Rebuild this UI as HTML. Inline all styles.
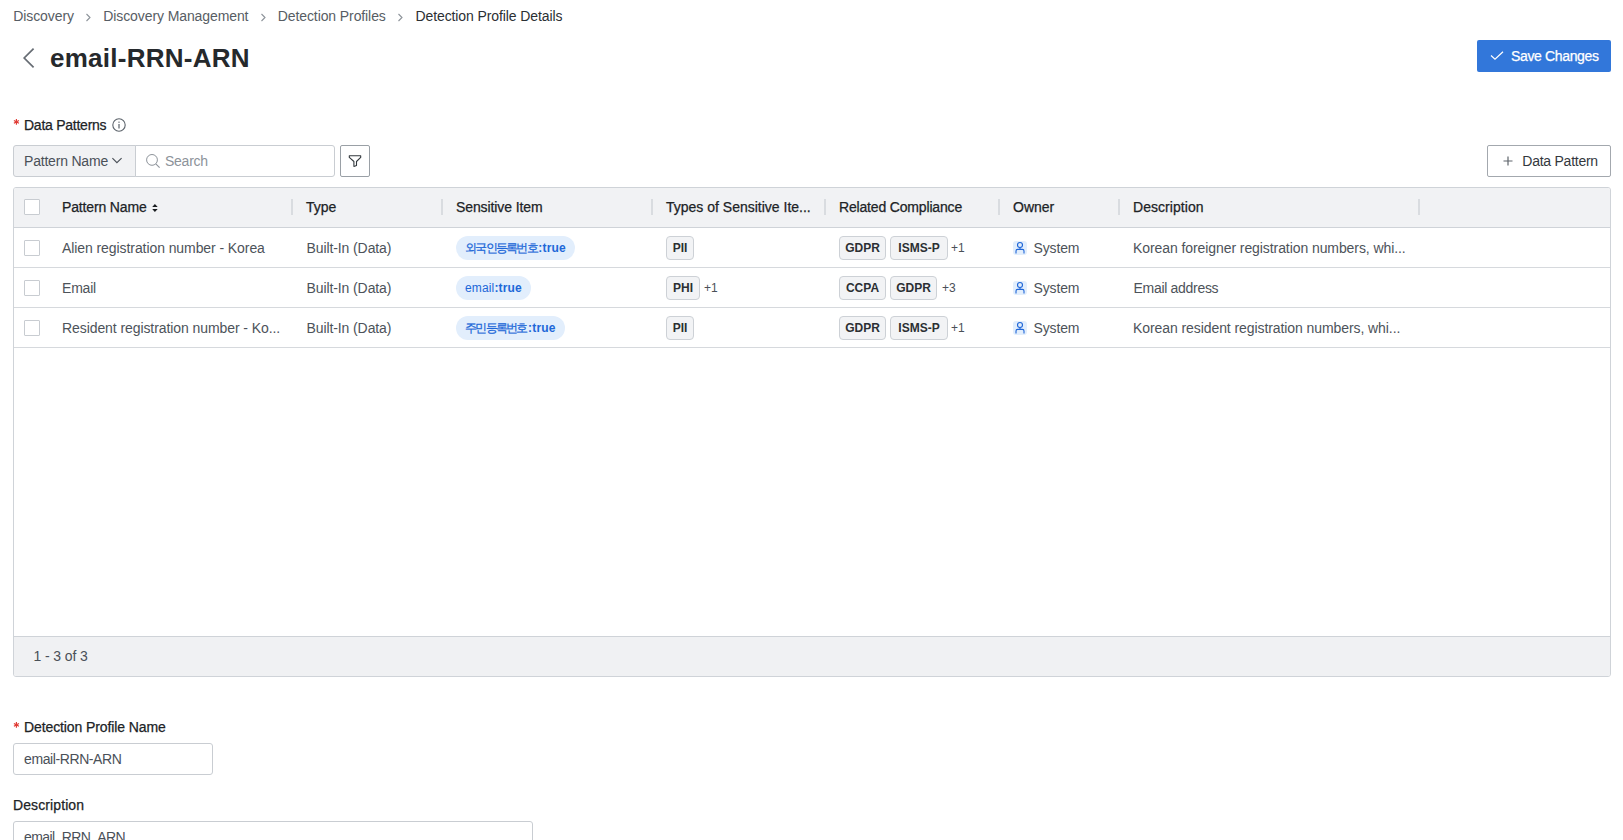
<!DOCTYPE html>
<html><head><meta charset="utf-8">
<style>
*{box-sizing:border-box;margin:0;padding:0}
html,body{width:1623px;height:840px;overflow:hidden;background:#fff}
body{font-family:"Liberation Sans",sans-serif;color:#4a5058;position:relative;font-size:14px;line-height:16px}
.abs{position:absolute;white-space:nowrap}
.med{-webkit-text-stroke:0.25px currentColor}
.bc{top:8px;color:#575d64;letter-spacing:-0.1px}
.bc.cur{color:#2b2f33}
.sep{position:absolute;top:13px}
.title{left:50px;top:43px;font-size:26px;line-height:30px;font-weight:700;color:#26292c;letter-spacing:0.25px}
.btn-primary{position:absolute;left:1477px;top:40px;width:134px;height:32px;background:#3277da;border-radius:2px;color:#fff}
.btn-outline{position:absolute;left:1487px;top:145px;width:124px;height:32px;border:1px solid #a3a8ae;border-radius:2px;background:#fff;color:#33383d}
.req{color:#e0342f}
.label{color:#202326}
.table{position:absolute;left:13px;top:187px;width:1598px;height:490px;border:1px solid #cfd3d8;border-radius:3px;overflow:hidden}
.thead{position:absolute;left:0;top:0;width:100%;height:40px;background:#f1f2f4;border-bottom:1px solid #cfd3d8}
.row{position:absolute;left:0;width:100%;height:40px;border-bottom:1px solid #d6d9dd;background:#fff}
.cb{position:absolute;left:10px;top:12px;width:16px;height:16px;border:1px solid #c8ccd1;background:#fff;border-radius:1px}
.th{position:absolute;top:11px;color:#202326}
.vsep{position:absolute;top:11px;width:2px;height:16px;background:#d9dce0}
.td{position:absolute;top:12px;color:#4d535a;letter-spacing:-0.08px}
.pill{position:absolute;top:8px;height:24px;border-radius:12px;background:#e2eefc;color:#2067d8;font-size:12px;line-height:24px;padding:0 9px;letter-spacing:0.15px}
.tag{position:absolute;top:8px;height:24px;border:1px solid #cdd1d6;border-radius:4px;background:#f2f3f5;color:#2b2f33;font-size:12px;line-height:22px;font-weight:700;padding:0;text-align:center}
.ko{font-size:11.5px;letter-spacing:-1.75px;margin-right:1.6px;-webkit-text-stroke:0.25px currentColor}
.more{position:absolute;top:12px;font-size:12px;color:#4a5058}
.footer{position:absolute;left:0;top:448px;width:100%;height:41px;background:#f0f1f3;border-top:1px solid #cfd3d8}
.input{position:absolute;border:1px solid #c9cdd2;border-radius:3px;background:#fff}
</style></head><body>

<!-- breadcrumb -->
<span class="abs bc" style="left:13.3px">Discovery</span>
<svg class="sep" style="left:85px" width="7" height="9" viewBox="0 0 7 9"><path d="M1.5 1 L5 4.5 L1.5 8" fill="none" stroke="#8d939a" stroke-width="1.1"/></svg>
<span class="abs bc" style="left:103.3px">Discovery Management</span>
<svg class="sep" style="left:260px" width="7" height="9" viewBox="0 0 7 9"><path d="M1.5 1 L5 4.5 L1.5 8" fill="none" stroke="#8d939a" stroke-width="1.1"/></svg>
<span class="abs bc" style="left:277.8px">Detection Profiles</span>
<svg class="sep" style="left:397px" width="7" height="9" viewBox="0 0 7 9"><path d="M1.5 1 L5 4.5 L1.5 8" fill="none" stroke="#8d939a" stroke-width="1.1"/></svg>
<span class="abs bc cur" style="left:415.5px">Detection Profile Details</span>

<!-- title -->
<svg class="abs" style="left:22px;top:47px" width="14" height="22" viewBox="0 0 14 22"><path d="M11.6 1.6 L2.2 11 L11.6 20.4" fill="none" stroke="#676d74" stroke-width="1.7"/></svg>
<span class="abs title">email-RRN-ARN</span>

<div class="btn-primary">
  <svg style="position:absolute;left:13px;top:11px" width="14" height="10" viewBox="0 0 14 10"><path d="M1 4.5 L5 8.3 L13 0.8" fill="none" stroke="#fff" stroke-width="1.2"/></svg>
  <span class="abs med" style="left:34px;top:8px;letter-spacing:-0.35px">Save Changes</span>
</div>

<!-- data patterns label -->
<svg class="abs" style="left:12px;top:118px" width="9" height="8" viewBox="0 0 9 8"><path d="M4.4 1 V6.8 M1.9 2.45 L6.9 5.35 M1.9 5.35 L6.9 2.45" stroke="#e03a33" stroke-width="1.15"/></svg>
<span class="abs label med" style="left:24px;top:117px;letter-spacing:-0.25px">Data Patterns</span>
<svg class="abs" style="left:112px;top:118px" width="14" height="14" viewBox="0 0 14 14"><circle cx="7" cy="7" r="6.2" fill="none" stroke="#5c636b" stroke-width="1.1"/><rect x="6.4" y="6" width="1.2" height="4.5" fill="#5c636b"/><rect x="6.4" y="3.6" width="1.2" height="1.2" fill="#5c636b"/></svg>

<!-- toolbar -->
<div class="input" style="left:13px;top:145px;width:123px;height:32px;background:#f1f2f4;border-radius:3px 0 0 3px">
  <span class="abs" style="left:10px;top:7px;color:#4a5058;letter-spacing:-0.2px">Pattern Name</span>
  <svg style="position:absolute;left:98px;top:11px" width="11" height="8" viewBox="0 0 11 8"><path d="M0.4 1.2 L4.9 5.6 L9.6 1.2" fill="none" stroke="#4a5058" stroke-width="1.15"/></svg>
</div>
<div class="input" style="left:135px;top:145px;width:200px;height:32px;border-radius:0 3px 3px 0">
  <svg style="position:absolute;left:9px;top:8px" width="16" height="16" viewBox="0 0 16 16"><circle cx="7" cy="5.9" r="5.4" fill="none" stroke="#8d939a" stroke-width="1"/><path d="M10.8 9.8 L14.6 13.6" stroke="#8d939a" stroke-width="1.1"/></svg>
  <span class="abs" style="left:29px;top:7px;color:#8d939a;letter-spacing:-0.25px">Search</span>
</div>
<div class="input" style="left:340px;top:145px;width:30px;height:32px;border-color:#9aa0a6;border-radius:2px">
  <svg style="position:absolute;left:7px;top:8px" width="15" height="15" viewBox="0 0 15 15"><path d="M1.3 1.7 H12.7 V3.4 L8.5 7.5 V11.4 L5.9 12.4 V7.5 L1.3 3.4 Z" fill="none" stroke="#33383d" stroke-width="1.1" stroke-linejoin="round"/></svg>
</div>

<div class="btn-outline">
  <svg style="position:absolute;left:15px;top:10px" width="10" height="11" viewBox="0 0 10 11"><path d="M5 0.5 V9.5 M0.5 5 H9.5" stroke="#5f656c" stroke-width="1.2"/></svg>
  <span class="abs" style="left:34.3px;top:7px;letter-spacing:-0.25px">Data Pattern</span>
</div>

<!-- table -->
<div class="table">
  <div class="thead">
    <div class="cb" style="top:11px"></div>
    <span class="th med" style="left:48px;letter-spacing:-0.15px">Pattern Name</span>
    <svg style="position:absolute;left:138px;top:16px" width="7" height="9" viewBox="0 0 7 9"><path d="M0.2 2.9 L2.9 0.1 L5.7 2.9 Z M0.2 5 L2.9 7.9 L5.7 5 Z" fill="#1a1d20"/></svg>
    <div class="vsep" style="left:277px"></div>
    <span class="th med" style="left:292px">Type</span>
    <div class="vsep" style="left:427px"></div>
    <span class="th med" style="left:442px;letter-spacing:-0.1px">Sensitive Item</span>
    <div class="vsep" style="left:637px"></div>
    <span class="th med" style="left:652px">Types of Sensitive Ite...</span>
    <div class="vsep" style="left:810px"></div>
    <span class="th med" style="left:825px;letter-spacing:-0.17px">Related Compliance</span>
    <div class="vsep" style="left:984px"></div>
    <span class="th med" style="left:999px">Owner</span>
    <div class="vsep" style="left:1104px"></div>
    <span class="th med" style="left:1119px;letter-spacing:0.05px">Description</span>
    <div class="vsep" style="left:1404px"></div>
  </div>

  <div class="row" style="top:40px">
    <div class="cb"></div>
    <span class="td" style="left:48px">Alien registration number - Korea</span>
    <span class="td" style="left:292.5px;letter-spacing:-0.1px">Built-In (Data)</span>
    <span class="pill" style="left:442px"><span class="ko">외국인등록번호</span><b>:true</b></span>
    <span class="tag" style="left:652px;width:28px">PII</span>
    <span class="tag" style="left:825px;width:47px">GDPR</span>
    <span class="tag" style="left:876px;width:58px">ISMS-P</span>
    <span class="more" style="left:937px">+1</span>
    <svg style="position:absolute;left:999px;top:13px" width="14" height="14" viewBox="0 0 14 14"><rect width="14" height="14" rx="3" fill="#e2eefc"/><circle cx="7" cy="4" r="2.5" fill="none" stroke="#2067d8" stroke-width="1.1"/><path d="M7 6.5 V8.4 M3 12.6 V10 Q3 8.4 4.6 8.4 H9.4 Q11 8.4 11 10 V12.6" fill="none" stroke="#2067d8" stroke-width="1.1"/></svg>
    <span class="td" style="left:1019.5px;letter-spacing:-0.15px">System</span>
    <span class="td" style="left:1119px">Korean foreigner registration numbers, whi...</span>
  </div>
  <div class="row" style="top:80px">
    <div class="cb"></div>
    <span class="td" style="left:48px;letter-spacing:-0.2px">Email</span>
    <span class="td" style="left:292.5px;letter-spacing:-0.1px">Built-In (Data)</span>
    <span class="pill" style="left:442px">email<b>:true</b></span>
    <span class="tag" style="left:652px;width:34px">PHI</span>
    <span class="more" style="left:690px">+1</span>
    <span class="tag" style="left:825px;width:47px">CCPA</span>
    <span class="tag" style="left:876px;width:47px">GDPR</span>
    <span class="more" style="left:928px">+3</span>
    <svg style="position:absolute;left:999px;top:13px" width="14" height="14" viewBox="0 0 14 14"><rect width="14" height="14" rx="3" fill="#e2eefc"/><circle cx="7" cy="4" r="2.5" fill="none" stroke="#2067d8" stroke-width="1.1"/><path d="M7 6.5 V8.4 M3 12.6 V10 Q3 8.4 4.6 8.4 H9.4 Q11 8.4 11 10 V12.6" fill="none" stroke="#2067d8" stroke-width="1.1"/></svg>
    <span class="td" style="left:1019.5px;letter-spacing:-0.15px">System</span>
    <span class="td" style="left:1119.5px;letter-spacing:-0.3px">Email address</span>
  </div>
  <div class="row" style="top:120px">
    <div class="cb"></div>
    <span class="td" style="left:48px">Resident registration number - Ko...</span>
    <span class="td" style="left:292.5px;letter-spacing:-0.1px">Built-In (Data)</span>
    <span class="pill" style="left:442px"><span class="ko">주민등록번호</span><b>:true</b></span>
    <span class="tag" style="left:652px;width:28px">PII</span>
    <span class="tag" style="left:825px;width:47px">GDPR</span>
    <span class="tag" style="left:876px;width:58px">ISMS-P</span>
    <span class="more" style="left:937px">+1</span>
    <svg style="position:absolute;left:999px;top:13px" width="14" height="14" viewBox="0 0 14 14"><rect width="14" height="14" rx="3" fill="#e2eefc"/><circle cx="7" cy="4" r="2.5" fill="none" stroke="#2067d8" stroke-width="1.1"/><path d="M7 6.5 V8.4 M3 12.6 V10 Q3 8.4 4.6 8.4 H9.4 Q11 8.4 11 10 V12.6" fill="none" stroke="#2067d8" stroke-width="1.1"/></svg>
    <span class="td" style="left:1019.5px;letter-spacing:-0.15px">System</span>
    <span class="td" style="left:1119px">Korean resident registration numbers, whi...</span>
  </div>

  <div class="footer">
    <span class="abs" style="left:19.5px;top:11px;color:#4a5058;letter-spacing:-0.1px">1 - 3 of 3</span>
  </div>
</div>

<!-- form -->
<svg class="abs" style="left:12px;top:721px" width="9" height="8" viewBox="0 0 9 8"><path d="M4.4 1 V6.8 M1.9 2.45 L6.9 5.35 M1.9 5.35 L6.9 2.45" stroke="#e03a33" stroke-width="1.15"/></svg>
<span class="abs label med" style="left:24px;top:719px;letter-spacing:-0.1px">Detection Profile Name</span>
<div class="input" style="left:13px;top:743px;width:200px;height:32px">
  <span class="abs" style="left:10px;top:7px;color:#4a5058;letter-spacing:-0.4px">email-RRN-ARN</span>
</div>
<span class="abs label med" style="left:13px;top:797px;letter-spacing:0.1px">Description</span>
<div class="input" style="left:13px;top:821px;width:520px;height:40px">
  <span class="abs" style="left:10px;top:7px;color:#4a5058;letter-spacing:-0.6px">email_RRN_ARN</span>
</div>

</body></html>
